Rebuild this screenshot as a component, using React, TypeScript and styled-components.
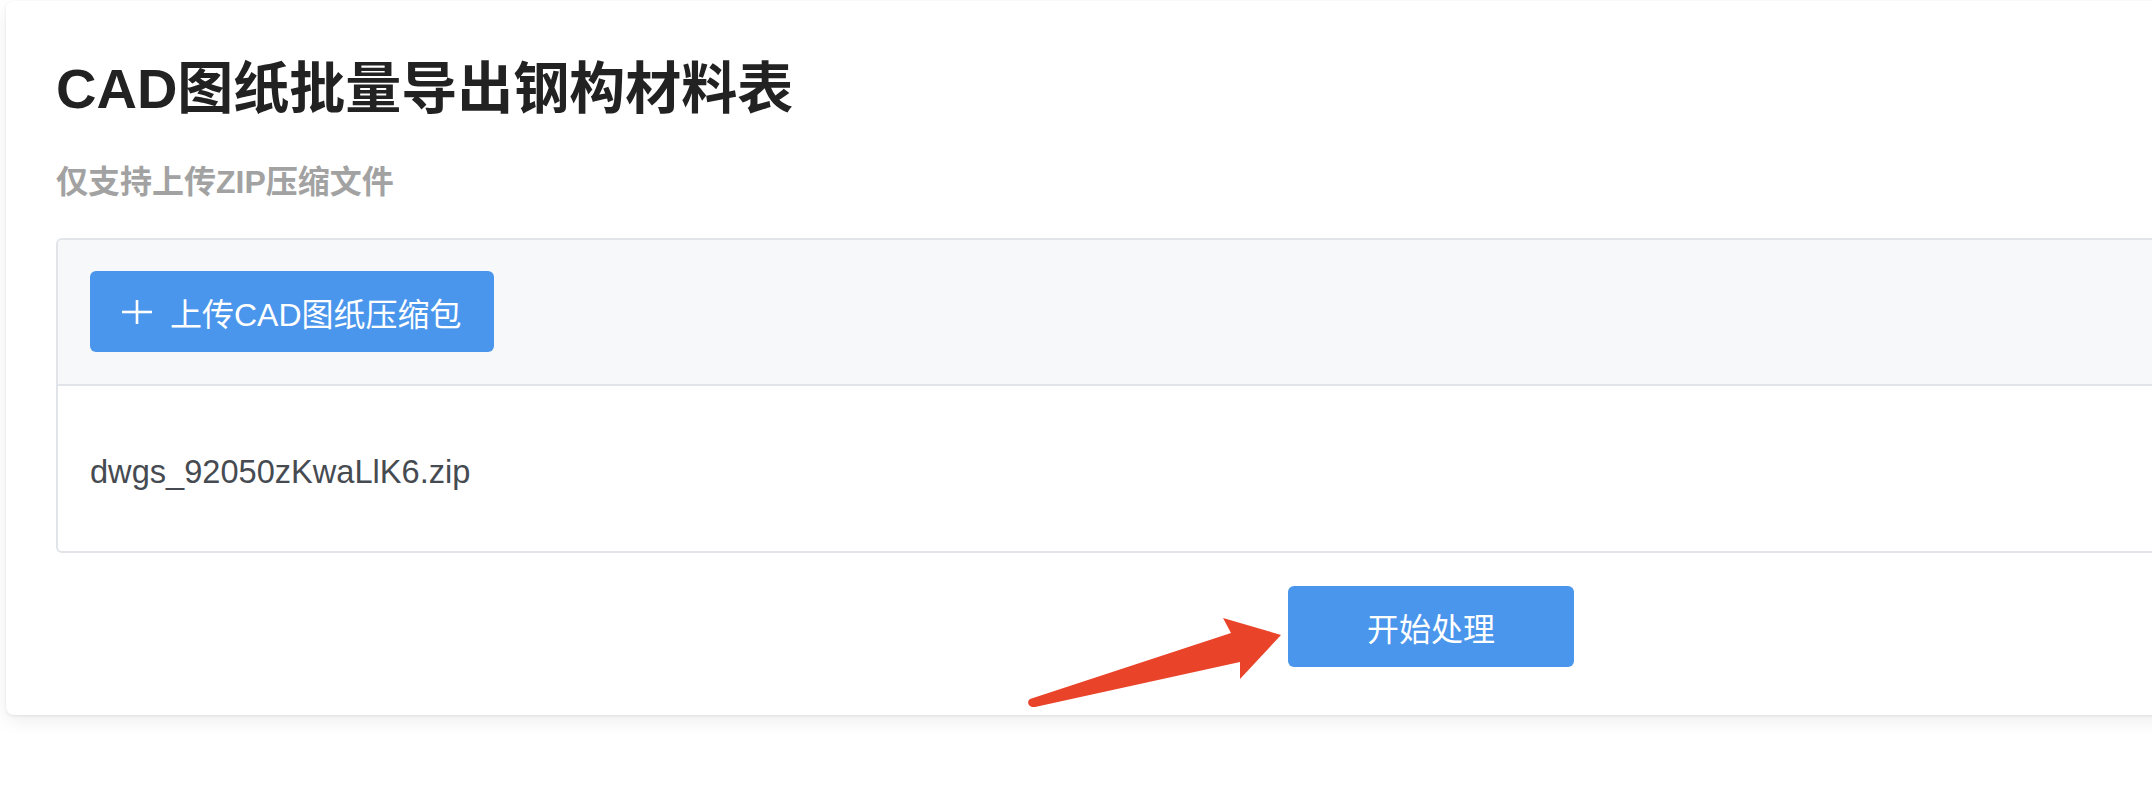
import React, { FC } from 'react';
import styled, { createGlobalStyle } from 'styled-components';

const GlobalStyle = createGlobalStyle`
  html, body {
    margin: 0;
    padding: 0;
    background: #ffffff;
    overflow: hidden;
  }
  body {
    font-family: "Liberation Sans", "Noto Sans CJK SC", sans-serif;
  }
`;

const Page = styled.div`
  width: 2152px;
  height: 794px;
  padding: 1px 0 0 6px;
  box-sizing: border-box;
  overflow: hidden;
`;

const Card = styled.section`
  width: 2850px;
  box-sizing: border-box;
  padding: 54px 50px 48px;
  background: #ffffff;
  border-radius: 8px;
  box-shadow: 0 6px 18px rgba(0, 0, 0, 0.07), 0 1px 3px rgba(0, 0, 0, 0.08);
`;

const Title = styled.h1`
  margin: 0;
  font-size: 56px;
  line-height: 67px;
  font-weight: 700;
  color: #222222;
`;

const Hint = styled.p`
  margin: 36px 0 0;
  font-size: 32px;
  line-height: 48px;
  font-weight: 700;
  color: #a2a2a2;
`;

const UploadBox = styled.div`
  margin-top: 32px;
  border: 2px solid #e1e4e8;
  border-radius: 6px;
  overflow: hidden;
`;

const BoxHeader = styled.div`
  padding: 31px 32px 32px;
  background: #f7f8fa;
  border-bottom: 2px solid #e1e4e8;
`;

const FileList = styled.ul`
  margin: 0;
  padding: 62px 32px 55px;
  list-style: none;
`;

const FileItem = styled.li`
  font-size: 32.6px;
  line-height: 48px;
  color: #464b52;
`;

const ActionRow = styled.div`
  display: flex;
  justify-content: center;
  margin-top: 33px;
`;

const ButtonWrap = styled.div`
  position: relative;
`;

const Button = styled.button<{ $width?: number }>`
  display: inline-flex;
  align-items: center;
  justify-content: center;
  gap: 18px;
  height: 81px;
  width: ${p => (p.$width ? `${p.$width}px` : 'auto')};
  padding: 0 32px;
  box-sizing: border-box;
  border: none;
  border-radius: 6px;
  background: #4a96ec;
  color: #ffffff;
  font-family: "Liberation Sans", "Noto Sans CJK SC", sans-serif;
  font-size: 32px;
  font-weight: 400;
  cursor: pointer;
`;

const Arrow = styled.svg`
  position: absolute;
  right: calc(100% + 6px);
  top: 31px;
  width: 256px;
  height: 92px;
`;

const PlusIcon: FC = () => (
  <svg width="30" height="24" viewBox="0 0 30 24" fill="none">
    <line x1="0" y1="12" x2="30" y2="12" stroke="#fff" strokeWidth="2.6" />
    <line x1="15" y1="0" x2="15" y2="24" stroke="#fff" strokeWidth="2.6" />
  </svg>
);

const App: FC = () => {
  const files = ['dwgs_92050zKwaLlK6.zip'];

  return (
    <React.Fragment>
      <GlobalStyle />
      <Page>
        <Card>
          <Title>CAD图纸批量导出钢构材料表</Title>
          <Hint>仅支持上传ZIP压缩文件</Hint>

          <UploadBox>
            <BoxHeader>
              <Button>
                <PlusIcon />
                上传CAD图纸压缩包
              </Button>
            </BoxHeader>
            <FileList>
              {files.map(name => (
                <FileItem key={name}>{name}</FileItem>
              ))}
            </FileList>
          </UploadBox>

          <ActionRow>
            <ButtonWrap>
              {/* annotation arrow pointing at the start button */}
              <Arrow viewBox="0 0 256 92">
                <path
                  d="M4 82 L205 16 L197 1 L255 18 L214 62 L214 45 L9 90 C3 91 0 85 4 82 Z"
                  fill="#e9432a"
                />
              </Arrow>
              <Button $width={286}>开始处理</Button>
            </ButtonWrap>
          </ActionRow>
        </Card>
      </Page>
    </React.Fragment>
  );
};

export default App;
